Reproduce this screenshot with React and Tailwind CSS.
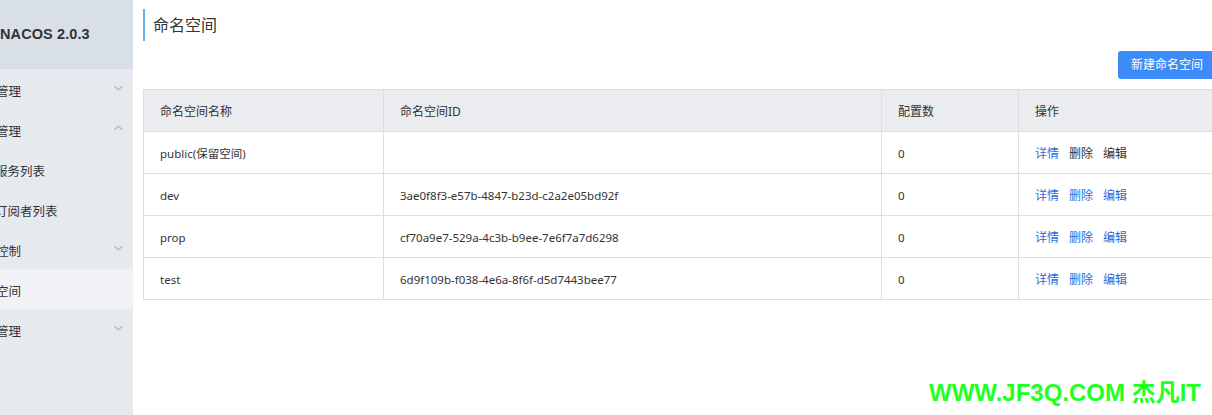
import React from 'react';

const menu = [
    { label: '配置管理', arrow: 'down' },
    { label: '服务管理', arrow: 'up' },
    { label: '服务列表', sub: true },
    { label: '订阅者列表', sub: true },
    { label: '权限控制', arrow: 'down' },
    { label: '命名空间', active: true },
    { label: '集群管理', arrow: 'down' }
];

const rows = [
    { name: 'public(保留空间)', id: '', count: 0, locked: true },
    { name: 'dev', id: '3ae0f8f3-e57b-4847-b23d-c2a2e05bd92f', count: 0 },
    { name: 'prop', id: 'cf70a9e7-529a-4c3b-b9ee-7e6f7a7d6298', count: 0 },
    { name: 'test', id: '6d9f109b-f038-4e6a-8f6f-d5d7443bee77', count: 0 }
];

const Chevron = ({ up }) => (
    <svg width="9" height="6" viewBox="0 0 9 6" className="text-[#8a94a6]">
        <path
            d={up ? 'M0.5 5 L4.5 1 L8.5 5' : 'M0.5 1 L4.5 5 L8.5 1'}
            fill="none"
            stroke="currentColor"
            strokeWidth="1"
        />
    </svg>
);

const App = () => {
    return (
        <div className="relative flex w-[1212px] h-[415px] overflow-hidden bg-white text-[#333] font-['Noto_Sans','Noto_Sans_CJK_SC',sans-serif] text-[12px]">
            {/* sidebar, scrolled so its left part is hidden */}
            <aside className="w-[133px] shrink-0 overflow-hidden bg-[#e6eaef]">
                <div className="w-[200px] -ml-[67px]">
                    <div className="h-[69px] bg-[#d8dfe6] flex items-center pl-[67px]">
                        <span className="font-['Liberation_Sans',sans-serif] font-bold text-[14.5px] text-[#333] tracking-[0.1px]">
                            NACOS 2.0.3
                        </span>
                    </div>
                    {menu.map((m) => (
                        <div
                            key={m.label}
                            className={`h-[40px] flex items-center justify-between pr-[10px] ${m.sub ? 'pl-[62px]' : 'pl-[38px]'} ${m.active ? 'bg-[#f0f2f5]' : ''}`}
                        >
                            <span className="text-[12.5px] text-[#333] pt-[6px]">{m.label}</span>
                            {m.arrow && (
                                <span className="-mt-[3px]">
                                    <Chevron up={m.arrow === 'up'} />
                                </span>
                            )}
                        </div>
                    ))}
                </div>
            </aside>

            {/* main */}
            <main className="shrink-0 w-[1083px] pl-[10px] pt-[9px]">
                <div className="border-l-[2px] border-[#6ab0e6] h-[32px] flex items-center pl-[8px]">
                    <h1 className="text-[16px] text-[#333] font-normal">命名空间</h1>
                </div>
                <div className="flex justify-end mt-[10px]">
                    <button className="h-[28px] px-[13px] rounded-[3px] bg-[#3d8bf8] text-white text-[12px]">
                        新建命名空间
                    </button>
                </div>
                <table className="mt-[10px] w-[1073px] border-collapse table-fixed">
                    <colgroup>
                        <col className="w-[240px]" />
                        <col className="w-[498px]" />
                        <col className="w-[137px]" />
                        <col />
                    </colgroup>
                    <thead>
                        <tr className="h-[42px] bg-[#ebecf0]">
                            {['命名空间名称', '命名空间ID', '配置数', '操作'].map((h) => (
                                <th key={h} className="border border-[#dcdee3] text-left font-normal px-[16px] pt-[2px] text-[12px]">
                                    {h}
                                </th>
                            ))}
                        </tr>
                    </thead>
                    <tbody>
                        {rows.map((r) => (
                            <tr key={r.name} className="h-[42px] text-[11.5px]">
                                <td className="border border-[#dcdee3] px-[16px] pt-[2px]">{r.name}</td>
                                <td className="border border-[#dcdee3] px-[16px] pt-[2px]">{r.id}</td>
                                <td className="border border-[#dcdee3] px-[16px] pt-[2px]">{r.count}</td>
                                <td className="border border-[#dcdee3] px-[16px] pt-[2px]">
                                    <div className="flex gap-[10px] text-[12px]">
                                        <span className="text-[#1f6be0]">详情</span>
                                        <span className={r.locked ? 'text-[#333]' : 'text-[#1f6be0]'}>删除</span>
                                        <span className={r.locked ? 'text-[#333]' : 'text-[#1f6be0]'}>编辑</span>
                                    </div>
                                </td>
                            </tr>
                        ))}
                    </tbody>
                </table>
            </main>

            {/* watermark */}
            <div className="absolute left-[929px] top-[381px] font-['Liberation_Sans','Noto_Sans_CJK_SC',sans-serif] font-bold text-[24px] leading-none text-[#22ff22] whitespace-nowrap">
                WWW.JF3Q.COM 杰凡IT
            </div>
        </div>
    );
};

export default App;
